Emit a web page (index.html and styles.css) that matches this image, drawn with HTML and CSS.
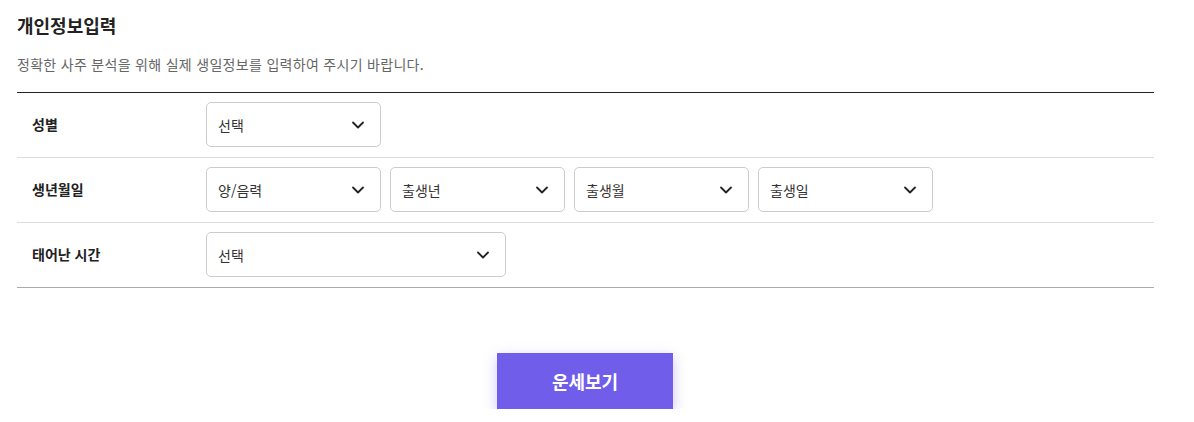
FILE: index.html
```html
<!DOCTYPE html>
<html lang="ko">

<head>
    <meta charset="UTF-8">
    <meta name="viewport" content="width=device-width, initial-scale=1.0">
    <title>개인정보입력</title>
    <link rel="stylesheet" href="styles.css">
</head>

<body>

    <div class="info">
        <h2 class="info-title">개인정보입력</h2>
        <p class="info-desc">정확한 사주 분석을 위해 실제 생일정보를 입력하여 주시기 바랍니다.</p>

        <div class="info-table">
            <div class="row">
                <div class="label">성별</div>
                <div class="fields">
                    <div class="select">
                        <span>선택</span>
                        <svg width="14" height="14" viewBox="0 0 14 14"><path d="M2 4.5 7 9.5 12 4.5" fill="none" stroke="#222" stroke-width="1.8" stroke-linecap="round" stroke-linejoin="round"/></svg>
                    </div>
                </div>
            </div>
            <div class="row">
                <div class="label">생년월일</div>
                <div class="fields">
                    <div class="select">
                        <span>양/음력</span>
                        <svg width="14" height="14" viewBox="0 0 14 14"><path d="M2 4.5 7 9.5 12 4.5" fill="none" stroke="#222" stroke-width="1.8" stroke-linecap="round" stroke-linejoin="round"/></svg>
                    </div>
                    <div class="select">
                        <span>출생년</span>
                        <svg width="14" height="14" viewBox="0 0 14 14"><path d="M2 4.5 7 9.5 12 4.5" fill="none" stroke="#222" stroke-width="1.8" stroke-linecap="round" stroke-linejoin="round"/></svg>
                    </div>
                    <div class="select">
                        <span>출생월</span>
                        <svg width="14" height="14" viewBox="0 0 14 14"><path d="M2 4.5 7 9.5 12 4.5" fill="none" stroke="#222" stroke-width="1.8" stroke-linecap="round" stroke-linejoin="round"/></svg>
                    </div>
                    <div class="select">
                        <span>출생일</span>
                        <svg width="14" height="14" viewBox="0 0 14 14"><path d="M2 4.5 7 9.5 12 4.5" fill="none" stroke="#222" stroke-width="1.8" stroke-linecap="round" stroke-linejoin="round"/></svg>
                    </div>
                </div>
            </div>
            <div class="row">
                <div class="label">태어난 시간</div>
                <div class="fields">
                    <div class="select select-wide">
                        <span>선택</span>
                        <svg width="14" height="14" viewBox="0 0 14 14"><path d="M2 4.5 7 9.5 12 4.5" fill="none" stroke="#222" stroke-width="1.8" stroke-linecap="round" stroke-linejoin="round"/></svg>
                    </div>
                </div>
            </div>
        </div>

        <div class="actions">
            <button class="btn-submit">운세보기</button>
        </div>
    </div>

</body>

</html>
```

FILE: styles.css
```css
* {
    margin: 0;
    padding: 0;
    box-sizing: border-box;
}

body {
    font-family: "Noto Sans CJK KR", "Noto Sans", sans-serif;
    color: #222;
    background-color: #fff;
}

.info {
    width: 1137px;
    margin-left: 17px;
    padding-top: 13px;
}

.info-title {
    font-size: 18px;
    font-weight: 700;
    line-height: 24px;
    color: #222;
}

.info-desc {
    margin-top: 17px;
    font-size: 14px;
    line-height: 20px;
    letter-spacing: 0.3px;
    color: #666;
}

.info-table {
    margin-top: 18px;
    border-top: 1px solid #222;
    border-bottom: 1px solid #aaa;
}

.row {
    display: flex;
    align-items: flex-start;
    height: 65px;
    padding-top: 9px;
    border-bottom: 1px solid #ddd;
}

.row:last-child {
    border-bottom: none;
    height: 64px;
}

.label {
    width: 189px;
    height: 45px;
    line-height: 45px;
    padding-left: 15px;
    font-size: 14px;
    font-weight: 700;
    color: #222;
}

.fields {
    display: flex;
    gap: 9px;
}

.select {
    display: flex;
    align-items: center;
    justify-content: space-between;
    width: 175px;
    height: 45px;
    padding: 0 15px 0 11px;
    border: 1px solid #ccc;
    border-radius: 5px;
    font-size: 14px;
    color: #333;
}

.select-wide {
    width: 300px;
}

.actions {
    display: flex;
    justify-content: center;
    margin-top: 65px;
}

.btn-submit {
    width: 176px;
    height: 56px;
    margin-right: 1px;
    border: none;
    background-color: #705de9;
    color: #fff;
    font-family: inherit;
    font-size: 18px;
    font-weight: 700;
    box-shadow: 0 4px 12px rgba(112, 93, 233, 0.35);
}
```
